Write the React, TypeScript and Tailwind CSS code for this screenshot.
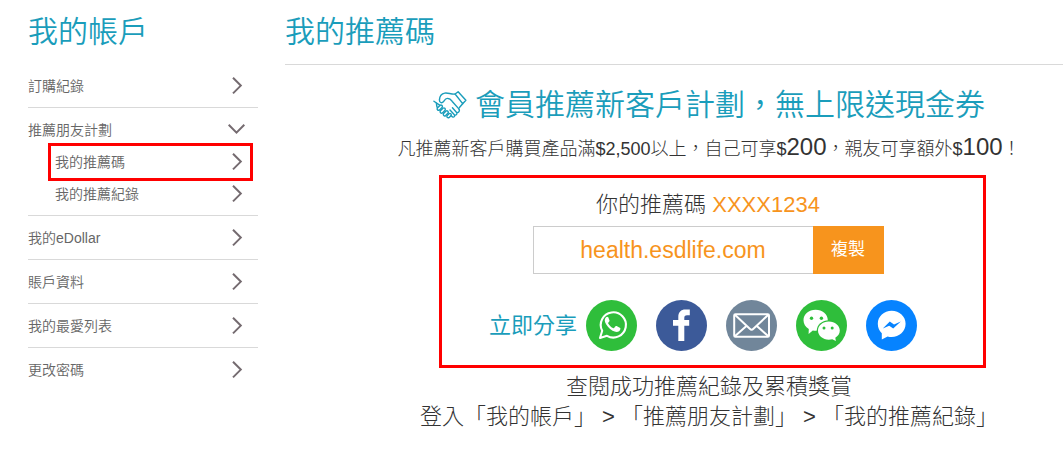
import React from "react";

type IconProps = { className?: string };

function ChevronRight() {
  return (
    <svg viewBox="0 0 18 18" className="h-[18px] w-[18px]" fill="none" stroke="#756b70" strokeWidth="2" aria-hidden="true">
      <path d="M5 0.8 L12.8 8.6 L5 16.4" />
    </svg>
  );
}

function ChevronDown() {
  return (
    <svg viewBox="0 0 18 18" className="h-[18px] w-[18px]" fill="none" stroke="#756b70" strokeWidth="2" aria-hidden="true">
      <path d="M0.7 3.8 L8.5 11.6 L16.3 3.8" />
    </svg>
  );
}

function Handshake({ className }: IconProps) {
  return (
    <svg viewBox="0 0 36 30" className={className} fill="none" stroke="#1a9dbb" strokeWidth="1.5" strokeLinecap="round" strokeLinejoin="round" aria-hidden="true">
      <path d="M23.4 3.4 L26.6 1 L34.8 10 L31.4 13.6 L23.4 3.4" />
      <path d="M23.4 3.4 C19 3.8 16 1.8 12.5 2.4 C9 3 7 6 6.8 9.6 C6.8 13 9.6 13.4 11.4 11 C12.6 9.2 13.2 8 15.2 8 C17.6 8 19.2 9.4 20.4 11.2 L27.6 19.4" />
      <path d="M31.4 13.6 L28 17.6" />
      <path d="M1 11 L7 15.2" />
      <path d="M3.6 13 C4 15 3.6 16.4 4.6 17.6" />
      <path d="M7.4 15.4 L4.6 18.2 C3.8 19.8 5.4 21.4 7 20.2 L9.8 17.4 C10.6 15.8 8.8 14.4 7.4 15.4 Z" />
      <path d="M10.6 18.4 L7.8 21.2 C6.8 22.8 8.6 24.4 10 23.4 L12.8 20.6 C13.6 19 12 17.4 10.6 18.4 Z" />
      <path d="M13.8 21.4 L11.2 24 C10.2 25.8 12 27.2 13.4 26.2 L16 23.6 C16.8 22 15.2 20.4 13.8 21.4 Z" />
      <path d="M17 24.2 L14.8 26.4 C14.2 28 15.8 29.2 17.2 28.2 L19.2 26.2 C19.8 24.8 18.4 23.2 17 24.2 Z" />
      <path d="M19.2 26.4 L20.6 27.6 C22.2 28.4 23.6 26.8 22.6 25.4 L18 20.4 M22.8 25.6 C24.8 26.2 26 24.2 25 23 L20.6 18 M25.2 23.2 C27.2 23.4 28.6 21.4 27.6 19.4" />
    </svg>
  );
}

function WhatsAppIcon() {
  return (
    <svg viewBox="0 0 51 51" className="h-[51px] w-[51px]" aria-hidden="true">
      <circle cx="25.5" cy="25.5" r="25.5" fill="#2fbe3b" />
      <path d="M14 38 L16.2 30.8 A12.6 12.6 0 1 1 21 35.8 Z" fill="none" stroke="#fff" strokeWidth="2.1" strokeLinejoin="round" />
      <path d="M22.3 17.2 c-.5-.8-1.6-.7-2.3 0 c-1.8 1.8-1.6 4.5.1 7 c2.2 3.5 5.3 6.5 9.3 7.6 c2.3.6 4.7-.7 5-2.8 c.1-.7 0-1-.6-1.3 l-3.2-1.6 c-.6-.3-1-.1-1.4.4 l-1.1 1.4 c-.4.4-.8.4-1.2.2 c-2.1-1-3.6-2.6-4.7-4.5 c-.2-.4-.1-.7.2-1 l1-1.3 c.2-.3.2-.6.1-.9 z" fill="#fff" />
    </svg>
  );
}

function FacebookIcon() {
  return (
    <svg viewBox="0 0 51 51" className="h-[51px] w-[51px]" aria-hidden="true">
      <circle cx="25.5" cy="25.5" r="25.5" fill="#3c5a99" />
      <path d="M22.3 41 V25.8 H17 V20 H22.3 V17.2 C22.3 12.2 25 9.6 29.4 9.6 H33.8 V15.2 H31 C29 15.2 28.3 16.2 28.3 18 V20 H33.2 V25.8 H28.3 V41 Z" fill="#fff" />
    </svg>
  );
}

function MailIcon() {
  return (
    <svg viewBox="0 0 51 51" className="h-[51px] w-[51px]" aria-hidden="true">
      <circle cx="25.5" cy="25.5" r="25.5" fill="#71869a" />
      <g fill="none" stroke="#fff" strokeWidth="2" strokeLinejoin="round" strokeLinecap="round">
        <rect x="8.2" y="14.2" width="34.8" height="22.6" rx="1.2" />
        <path d="M9.4 15.2 L23.8 28.8 Q25.6 30.6 27.4 28.8 L41.8 15.2 M9.4 35.8 L20.4 26 M41.8 35.8 L30.8 26" />
      </g>
    </svg>
  );
}

function WeChatIcon() {
  return (
    <svg viewBox="0 0 51 51" className="h-[51px] w-[51px]" aria-hidden="true">
      <circle cx="25.5" cy="25.5" r="25.5" fill="#2fbe3b" />
      <path d="M19.6 9.8 C12.8 9.8 7.5 14.4 7.5 20.3 C7.5 23.8 9.4 27 12.8 29 L12.6 34 L16.8 30.6 C24.6 32 31.8 27.4 31.8 20.3 C31.8 14.4 26.4 9.8 19.6 9.8 Z" fill="#fff" />
      <ellipse cx="32.8" cy="30.6" rx="12" ry="10.3" fill="#2fbe3b" />
      <path d="M32.8 21.4 C26.8 21.4 22 25.4 22 30.6 C22 35.8 26.8 39.7 32.8 39.7 C34 39.7 35.2 39.5 36.3 39.2 L39.9 41 L39.3 37.8 C42 36.2 43.8 33.6 43.8 30.6 C43.8 25.4 38.9 21.4 32.8 21.4 Z" fill="#fff" />
      <g fill="#2fbe3b">
        <circle cx="15.5" cy="18.2" r="1.7" />
        <circle cx="25.4" cy="18.2" r="1.7" />
        <circle cx="28" cy="28" r="1.5" />
        <circle cx="36.2" cy="28" r="1.5" />
      </g>
    </svg>
  );
}

function MessengerIcon() {
  return (
    <svg viewBox="0 0 51 51" className="h-[51px] w-[51px]" aria-hidden="true">
      <circle cx="25.5" cy="25.5" r="25.5" fill="#0683ff" />
      <path d="M25.7 10.8 C18 10.8 11.8 16.4 11.8 23.8 C11.8 27.6 13.2 30.8 15.8 33.2 V39.4 L21.6 36.6 C31 39 39.6 32.4 39.6 23.8 C39.6 16.4 33.4 10.8 25.7 10.8 Z" fill="#fff" />
      <path d="M16.8 28.4 L23.8 21.6 L28 24.6 L34.8 21.6 L27.2 28.6 L23.2 25.8 Z" fill="#0683ff" />
    </svg>
  );
}

const shares = [
  { name: "WhatsApp", Icon: WhatsAppIcon },
  { name: "Facebook", Icon: FacebookIcon },
  { name: "Email", Icon: MailIcon },
  { name: "WeChat", Icon: WeChatIcon },
  { name: "Messenger", Icon: MessengerIcon },
];

function NavLink({ label }: { label: string }) {
  return (
    <a href="#" className="flex h-[43px] items-center justify-between pr-3">
      {label}
      <ChevronRight />
    </a>
  );
}

function Sidebar() {
  return (
    <aside className="w-[230px] shrink-0">
      <h2 className="h-16 text-[30px] leading-16 font-[350] text-[#1a9dbb]">我的帳戶</h2>
      <nav className="text-sm text-[#666666]">
        <ul className="divide-y divide-[#d9d9d9] font-[350]">
          <li><NavLink label="訂購紀錄" /></li>
          <li>
            <button type="button" aria-expanded="true" className="flex h-[43px] w-full items-center justify-between pr-3">
              推薦朋友計劃
              <ChevronDown />
            </button>
            <ul className="-mt-[5px] pb-[5px]">
              <li className="relative">
                <a href="#" aria-current="page" className="flex h-8 items-center justify-between pr-3 pl-[27px]">
                  我的推薦碼
                  <ChevronRight />
                </a>
                <span className="pointer-events-none absolute -inset-y-[3px] right-[5px] left-5 border-3 border-[#ff0000]" />
              </li>
              <li>
                <a href="#" className="flex h-8 items-center justify-between pr-3 pl-[27px]">
                  我的推薦紀錄
                  <ChevronRight />
                </a>
              </li>
            </ul>
          </li>
          <li><NavLink label="我的eDollar" /></li>
          <li><NavLink label="賬戶資料" /></li>
          <li><NavLink label="我的最愛列表" /></li>
          <li><NavLink label="更改密碼" /></li>
        </ul>
      </nav>
    </aside>
  );
}

export default function App() {
  return (
    <div lang="zh-Hant" className="flex min-h-screen bg-white pl-7 font-['Liberation_Sans','Noto_Sans_CJK_TC',sans-serif] text-[#333333]">
      <Sidebar />
      <main className="ml-[27px] min-w-0 flex-1">
        <h1 className="border-b border-[#d9d9d9] text-[30px] leading-16 font-[350] text-[#1a9dbb]">我的推薦碼</h1>
        <div className="flex flex-col items-center pl-[70px] font-light">
          <h2 className="mt-5 flex items-center gap-2 text-[30px] leading-10 font-[350] whitespace-nowrap text-[#1a9dbb]">
            <Handshake className="h-[30px] w-[34px]" />
            會員推薦新客戶計劃，無上限送現金券
          </h2>
          <p className="mt-1 text-lg leading-9 whitespace-nowrap">
            凡推薦新客戶購買產品滿$2,500以上，自己可享$<span className="text-2xl leading-9">200</span>，親友可享額外$<span className="text-2xl leading-9">100</span>！
          </p>
          <section className="mt-2 ml-1.5 flex w-[547px] flex-col items-center border-3 border-[#ff0000] pt-1.5 pr-2 pb-[14px]">
            <p className="text-[22px] leading-[42px]">
              你的推薦碼 <span className="text-[#f7941d]">XXXX1234</span>
            </p>
            <div className="flex h-12">
              <input
                aria-label="推薦連結"
                readOnly
                value="health.esdlife.com"
                className="w-[280px] border border-r-0 border-[#cccccc] text-center text-[23px] text-[#f7941d] outline-none"
              />
              <button type="button" className="w-[71px] bg-[#f7941d] text-[17px] font-normal text-white">複製</button>
            </div>
            <div className="mt-[26px] flex items-center pr-2.5">
              <span className="mr-[9px] text-[22px] font-normal text-[#1a9dbb]">立即分享</span>
              <div className="flex gap-[19px]">
                {shares.map(({ name, Icon }) => (
                  <a key={name} href="#" aria-label={name}>
                    <Icon />
                  </a>
                ))}
              </div>
            </div>
          </section>
          <p className="mt-1 text-center text-[22px] leading-[30px] whitespace-nowrap">
            查閱成功推薦紀錄及累積獎賞
            <br />
            登入「我的帳戶」 &gt; 「推薦朋友計劃」 &gt; 「我的推薦紀錄」
          </p>
        </div>
      </main>
    </div>
  );
}
